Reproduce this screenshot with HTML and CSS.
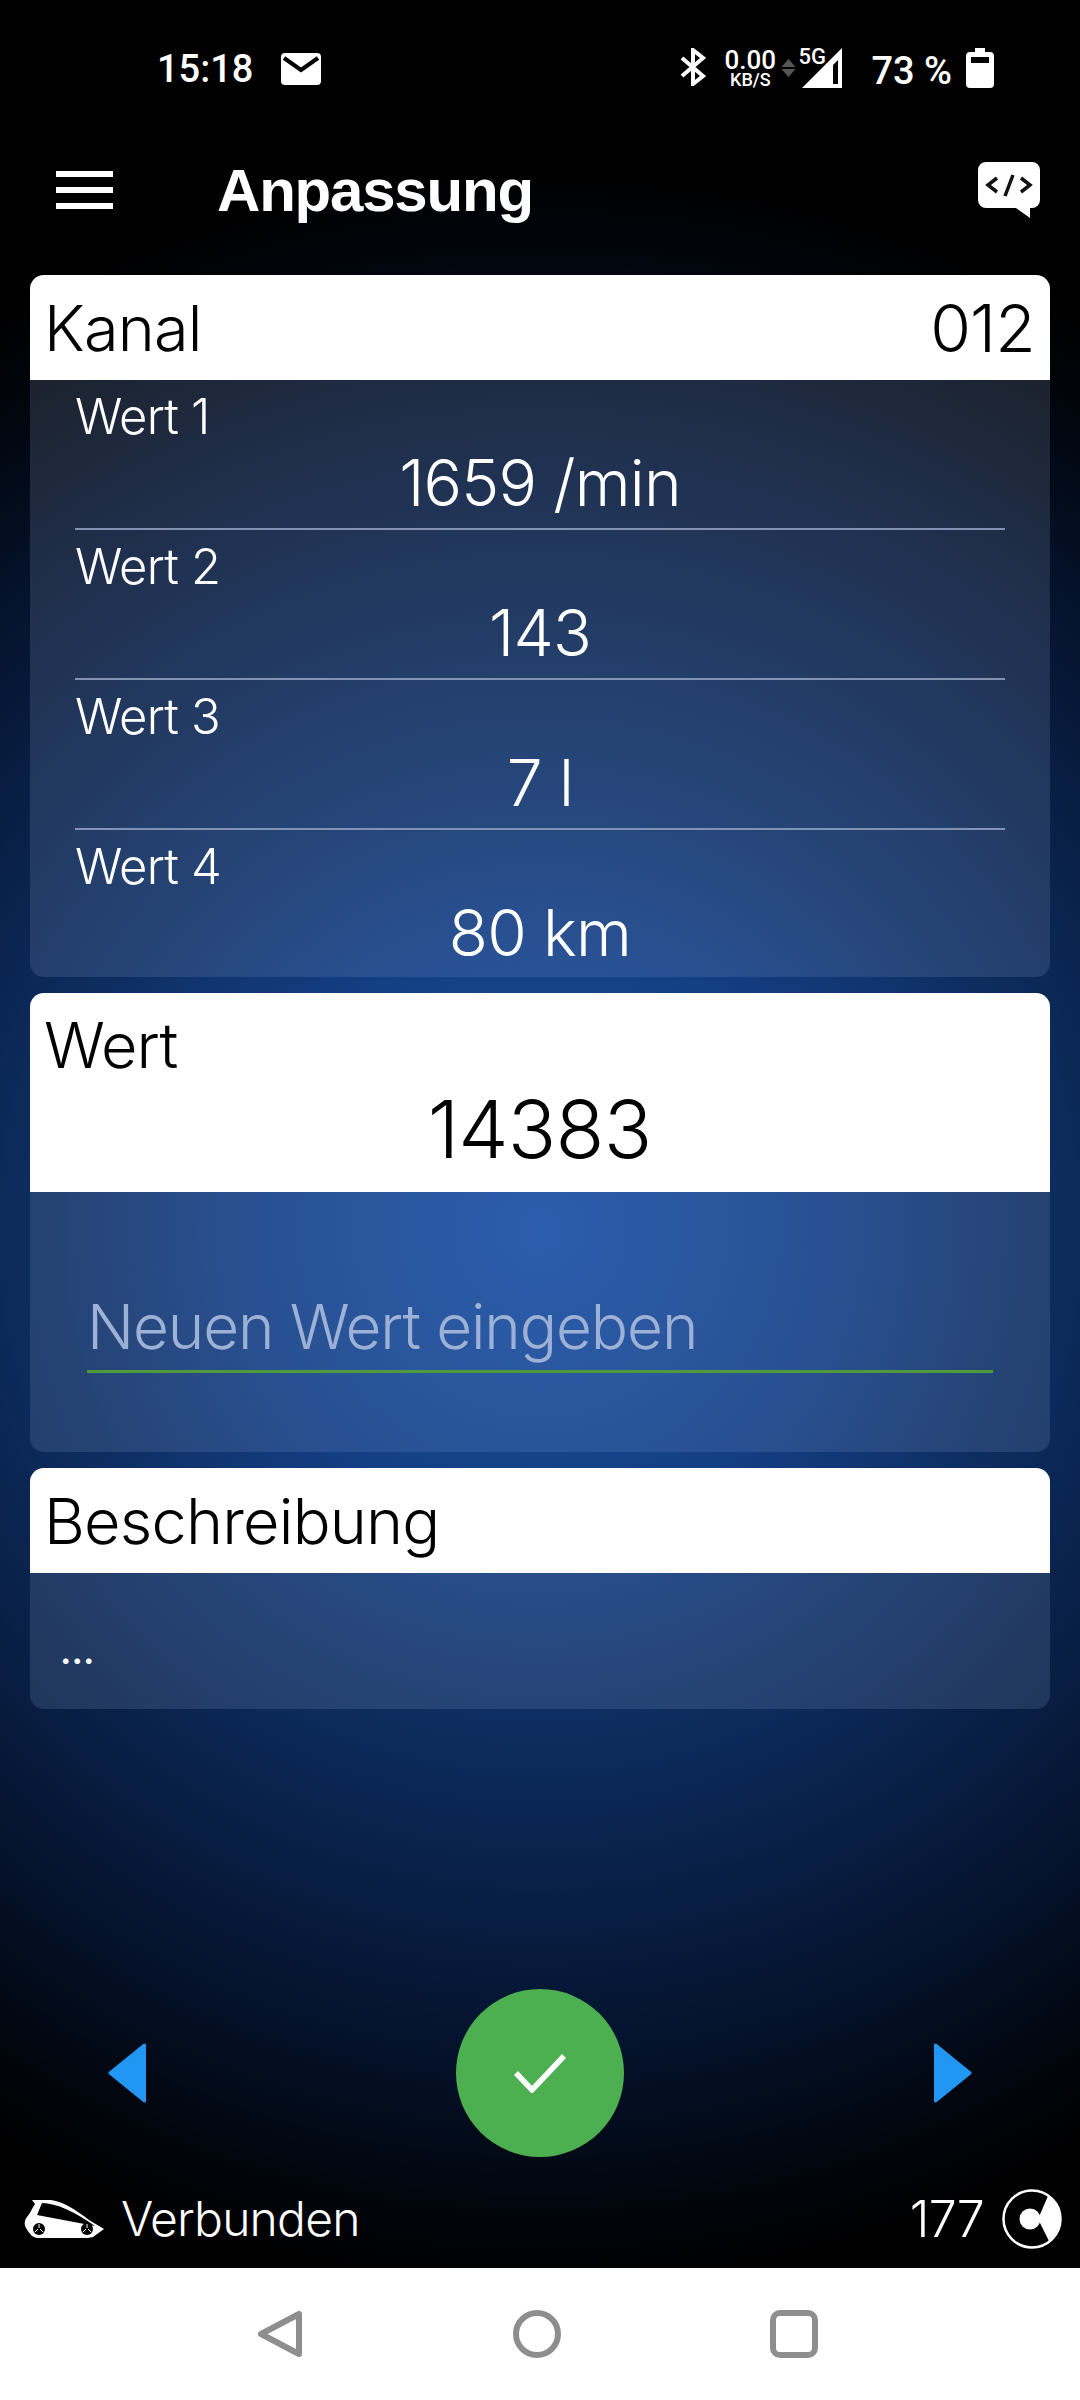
FILE: index.html
```html
<!DOCTYPE html>
<html lang="de">
<head>
    <meta charset="UTF-8">
    <meta name="viewport" content="width=device-width, initial-scale=1.0">
    <title>Anpassung</title>
    <link rel="stylesheet" href="styles.css">
</head>
<body>

<div class="status-bar">
    <span class="clock">15:18</span>
    <svg class="mail-icon" width="40" height="32" viewBox="0 0 40 32">
        <path fill="#fff" d="M4 0h32a4 4 0 0 1 4 4v24a4 4 0 0 1-4 4H4a4 4 0 0 1-4-4V4a4 4 0 0 1 4-4z"/>
        <path fill="none" stroke="#000" stroke-width="4" d="M3 5l17 12L37 5"/>
    </svg>
    <div class="status-right">
        <svg width="26" height="38" viewBox="0 0 26 38">
            <path fill="none" stroke="#fff" stroke-width="4" d="M2 10l21 18-10 8V2l10 8L2 28"/>
        </svg>
        <div class="speed">
            <span class="speed-value">0.00</span>
            <span class="speed-unit">KB/S</span>
        </div>
        <svg class="arrows" width="15" height="18" viewBox="0 0 15 18">
            <path fill="#555" d="M7.500 0l7 8H.5zM.5 10h14l-7 8z"/>
        </svg>
        <div class="signal">
            <span class="signal-label">5G</span>
            <svg width="40" height="40" viewBox="0 0 40 40">
                <path fill="#fff" fill-rule="evenodd" d="M40 0v40H0zM36 12l-5 5v19h5z"/>
            </svg>
        </div>
        <span class="battery-text">73 %</span>
        <svg width="28" height="40" viewBox="0 0 28 40">
            <path fill="#fff" fill-rule="evenodd" d="M9 0h10v4h5a4 4 0 0 1 4 4v28a4 4 0 0 1-4 4H4a4 4 0 0 1-4-4V8a4 4 0 0 1 4-4h5zM5 9v6h18V9z"/>
        </svg>
    </div>
</div>

<header class="toolbar">
    <div class="menu-icon">
        <span></span>
        <span></span>
        <span></span>
    </div>
    <h1>Anpassung</h1>
    <svg class="code-icon" width="62" height="56" viewBox="0 0 62 56">
        <path fill="#fff" d="M8 0h46a8 8 0 0 1 8 8v30a8 8 0 0 1-8 8h-2v10L38 46H8a8 8 0 0 1-8-8V8a8 8 0 0 1 8-8z"/>
        <path fill="none" stroke="#111" stroke-width="3.500" d="M19 16l-9 7 9 7M43 16l9 7-9 7M35 13l-8 21"/>
    </svg>
</header>

<main class="content">
    <section class="card">
        <div class="card-header split">
            <span>Kanal</span>
            <span class="channel">012</span>
        </div>
        <div class="values">
            <div class="value-row">
                <div class="value-label">Wert 1</div>
                <div class="value-text">1659 /min</div>
            </div>
            <div class="value-row">
                <div class="value-label">Wert 2</div>
                <div class="value-text">143</div>
            </div>
            <div class="value-row">
                <div class="value-label">Wert 3</div>
                <div class="value-text">7 l</div>
            </div>
            <div class="value-row last">
                <div class="value-label">Wert 4</div>
                <div class="value-text">80 km</div>
            </div>
        </div>
    </section>

    <section class="card">
        <div class="card-header stacked">
            <div>Wert</div>
            <div class="current-value">14383</div>
        </div>
        <div class="input-area">
            <input class="value-input" type="text" placeholder="Neuen Wert eingeben">
        </div>
    </section>

    <section class="card">
        <div class="card-header">Beschreibung</div>
        <div class="description">...</div>
    </section>
</main>

<div class="actions">
    <svg width="38" height="60" viewBox="0 0 38 60">
        <path fill="#2196f3" stroke="#2196f3" stroke-width="3" stroke-linejoin="round" d="M36.500 2v56L2 30z"/>
    </svg>
    <button class="confirm-btn">
        <svg width="52" height="40" viewBox="0 0 52 40">
            <path fill="none" stroke="#fff" stroke-width="5.500" d="M2 20l16 17L50 3"/>
        </svg>
    </button>
    <svg width="38" height="60" viewBox="0 0 38 60">
        <path fill="#2196f3" stroke="#2196f3" stroke-width="3" stroke-linejoin="round" d="M1.500 2v56L36 30z"/>
    </svg>
</div>

<div class="connection">
    <svg width="80" height="38" viewBox="0 0 80 38">
        <path fill="#fff" d="M8 0h19c13 2 25 10 38 20l15 9-11 8-5 1H14c-5 0-8-4-10-7-3-4-4-7-3-10 1-4 5-7 7-12l3-5z"/>
        <path fill="#000" d="M18 3c14 0 33 9 53 23L13 15z"/>
        <circle cx="15" cy="29" r="6" fill="#000"/>
        <circle cx="63" cy="29" r="6" fill="#000"/>
        <path fill="none" stroke="#fff" stroke-width="1" d="M15 24v4M11 32l3-3M19 32l-3-3M63 24v4M59 32l3-3M67 32l-3-3"/>
    </svg>
    <span class="connection-text">Verbunden</span>
    <span class="counter">177</span>
    <svg width="60" height="60" viewBox="0 0 60 60">
        <circle cx="30" cy="30" r="28.500" fill="none" stroke="#fff" stroke-width="2.500"/>
        <path fill="#fff" d="M36 30L46 7A28 28 0 0 1 47 52z"/>
        <circle cx="28" cy="30" r="10.500" fill="#fff"/>
    </svg>
</div>

<nav class="nav-bar">
    <svg width="46" height="48" viewBox="0 0 46 48">
        <path fill="none" stroke="#8e8e8e" stroke-width="6" stroke-linejoin="round" d="M42 4v40L4 24z"/>
    </svg>
    <svg width="48" height="48" viewBox="0 0 48 48">
        <circle cx="24" cy="24" r="21" fill="none" stroke="#8e8e8e" stroke-width="6"/>
    </svg>
    <svg width="48" height="48" viewBox="0 0 48 48">
        <rect x="3" y="3" width="42" height="42" rx="7" fill="none" stroke="#8e8e8e" stroke-width="6"/>
    </svg>
</nav>

</body>
</html>
```

FILE: styles.css
```css
* {
    box-sizing: border-box;
}
body {
    margin: 0;
    width: 1080px;
    height: 2400px;
    display: flex;
    flex-direction: column;
    font-family: Inter, "Liberation Sans", sans-serif;
    font-weight: 340;
    letter-spacing: -0.8px;
    color: white;
    background: radial-gradient(circle at 540px 1230px, #1c4f9e 0, #143e82 300px, #0b2856 560px, #051430 800px, #01050c 980px, #000 1060px);
}
.status-bar {
    height: 135px;
    padding: 45px 0 0 157px;
    display: flex;
    align-items: flex-start;
    letter-spacing: 0;
}
.clock {
    font-family: Roboto, sans-serif;
    font-size: 38px;
    font-weight: 500;
    line-height: 48px;
}
.mail-icon {
    margin: 8px 0 0 28px;
}
.status-right {
    margin-left: auto;
    margin-right: 86px;
    margin-top: 3px;
    display: flex;
    align-items: flex-start;
}
.speed {
    margin: 1px 0 0 18px;
    width: 52px;
    display: flex;
    flex-direction: column;
    align-items: center;
    font-family: Roboto, sans-serif;
    font-weight: 500;
}
.speed-value {
    font-size: 26px;
    line-height: 22px;
}
.speed-unit {
    font-size: 18px;
    line-height: 17px;
}
.arrows {
    margin: 11px 0 0 5px;
}
.signal {
    position: relative;
    margin-left: 6px;
}
.signal-label {
    position: absolute;
    top: -4px;
    left: -4px;
    font-family: Roboto, sans-serif;
    font-weight: 500;
    font-size: 22px;
}
.battery-text {
    margin: 0 14px 0 29px;
    font-family: Roboto, sans-serif;
    font-size: 38px;
    font-weight: 500;
    line-height: 46px;
}
.toolbar {
    height: 110px;
    padding: 0 40px 0 56px;
    display: flex;
    align-items: center;
}
.menu-icon {
    width: 57px;
    height: 38px;
    display: flex;
    flex-direction: column;
    justify-content: space-between;
}
.menu-icon span {
    height: 6px;
    background: white;
}
.toolbar h1 {
    margin: 0 0 0 104px;
    font-family: "Liberation Sans", sans-serif;
    font-size: 60px;
    font-weight: bold;
    letter-spacing: -0.02em;
}
.code-icon {
    margin-left: auto;
}
.content {
    flex: 1;
    padding: 30px 30px 0;
    display: flex;
    flex-direction: column;
    gap: 16px;
}
.card {
    border-radius: 14px;
    overflow: hidden;
    background: radial-gradient(circle at 540px 1230px, rgba(70, 120, 200, 0.35) 0, rgba(100, 125, 170, 0.27) 420px, rgba(120, 135, 165, 0.23) 900px) fixed;
}
.card-header {
    height: 105px;
    padding: 0 15px 0 14px;
    display: flex;
    align-items: center;
    background: white;
    color: black;
    font-size: 63px;
}
.card-header.split {
    justify-content: space-between;
}
.channel {
    font-size: 66px;
}
.card-header.stacked {
    height: 199px;
    display: block;
    padding-top: 14px;
}
.current-value {
    font-size: 80px;
    line-height: 92px;
    text-align: center;
}
.values {
    padding: 0 45px 0 45px;
}
.value-row {
    height: 150px;
    border-bottom: 2px solid #8292b2;
}
.value-row.last {
    height: 147px;
    border-bottom: none;
}
.value-label {
    padding-top: 11px;
    font-size: 49px;
    line-height: 52px;
}
.value-text {
    padding-top: 3px;
    font-size: 64px;
    line-height: 74px;
    text-align: center;
}
.input-area {
    height: 260px;
    padding: 91px 57px 0;
}
.value-input {
    width: 100%;
    height: 90px;
    padding: 0;
    border: none;
    border-bottom: 3px solid #4f9a3c;
    outline: none;
    background: transparent;
    font-family: inherit;
    font-weight: inherit;
    letter-spacing: -1.1px;
    font-size: 62px;
    color: white;
}
.value-input::placeholder {
    color: #9db1d6;
    opacity: 1;
}
.description {
    height: 136px;
    padding: 56px 0 0 30px;
    font-size: 36px;
    font-weight: 600;
    letter-spacing: 0;
}
.actions {
    height: 168px;
    padding: 0 108px;
    display: flex;
    align-items: center;
    justify-content: space-between;
}
.confirm-btn {
    width: 168px;
    height: 168px;
    padding: 0;
    border: none;
    border-radius: 50%;
    background: #4caf50;
    display: flex;
    align-items: center;
    justify-content: center;
}
.connection {
    height: 111px;
    padding: 12px 18px 0 24px;
    display: flex;
    align-items: center;
}
.connection-text {
    margin-left: 17px;
    font-size: 48px;
}
.counter {
    margin-left: auto;
    margin-right: 18px;
    font-size: 50px;
}
.nav-bar {
    height: 132px;
    padding: 42px 262px 0 257px;
    display: flex;
    align-items: flex-start;
    justify-content: space-between;
    background: white;
}
```
